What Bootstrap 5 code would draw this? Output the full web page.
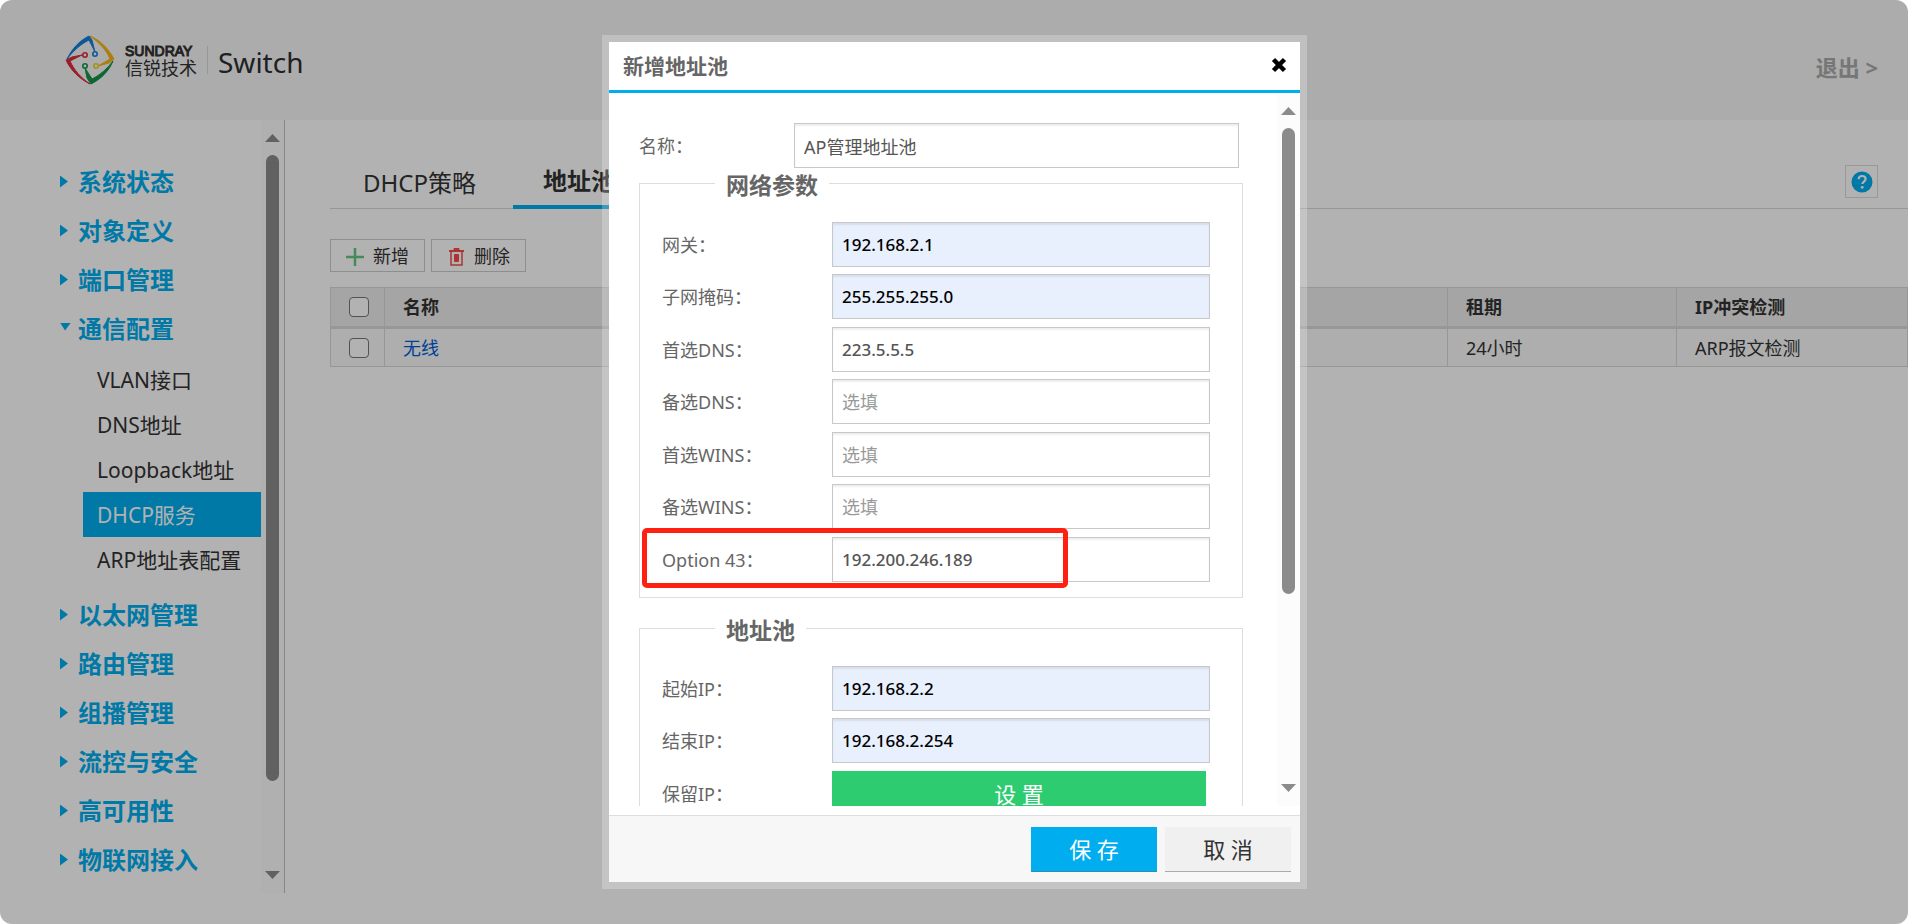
<!DOCTYPE html>
<html lang="zh-CN">
<head>
<meta charset="utf-8">
<meta name="viewport" content="width=device-width, initial-scale=1">
<title>SUNDRAY Switch</title>
<link href="https://cdn.jsdelivr.net/npm/bootstrap@5.3.0/dist/css/bootstrap.min.css" rel="stylesheet">
<style>
  body { font-family: "Noto Sans", "Noto Sans CJK SC", sans-serif; font-size: 18px; line-height: 24px; color: #333; background: #fff; }
  a { text-decoration: none; color: inherit; }
  .app { height: 100vh; border-radius: 12px; overflow: hidden; background: #fff; }
  .topbar { height: 120px; background: #f6f6f6; padding: 0 30px 0 65px; flex: none; }
  .brand-lockup { gap: 10px; }
  .brand-en { font: 14px/16px "Liberation Sans", sans-serif; -webkit-text-stroke: 1px #333; }
  .brand-zh { font-size: 18px; line-height: 18px; }
  .brand-rule { width: 1px; height: 28px; background: #d8d8d8; }
  .brand-product { font-size: 28px; line-height: 32px; color: #2c2f33; padding-top: 3px; }
  .logout { font-size: 22px; font-weight: 700; color: #a9a9a9; margin-top: 13px; }

  .workspace { min-height: 0; }
  .sidebar { width: 285px; flex: none; border-right: 1px solid #c0c0c0; margin-bottom: 31px; overflow: hidden; }
  .side-menu { padding: 37px 0 0 60px; }
  .side-menu .group { display: flex; align-items: center; height: 49px; font-size: 24px; font-weight: 700; color: #00aef0; }
  .side-menu .group::before { content: ""; flex: none; width: 18px; height: 12px; background: currentColor; clip-path: polygon(0 0, 8px 6px, 0 12px); }
  .side-menu .group.open::before { height: 8px; clip-path: polygon(0 0, 11px 0, 5px 8px); margin-bottom: 4px; }
  .side-sub { padding: 4px 0 8px 23px; }
  .side-sub a { display: flex; align-items: center; height: 45px; padding-left: 14px; font-size: 21px; white-space: nowrap; }
  .side-sub a.active { background: #00aef0; color: #fff; }

  .scroll-rail { width: 23px; flex: none; background: #fcfcfc; padding: 14px 0; }
  .scroll-rail::before, .scroll-rail::after { content: ""; width: 15px; height: 8px; background: #8b8b8b; clip-path: polygon(50% 0, 100% 100%, 0 100%); }
  .scroll-rail::after { clip-path: polygon(0 0, 100% 0, 50% 100%); margin-top: auto; }
  .scroll-rail i { width: 13px; margin-top: 13px; border-radius: 7px; background: #8b8b8b; }

  .content-pane { padding: 37px 0 0 45px; min-width: 0; }
  .page-tabs { border-bottom: 1px solid #d8d8d8; padding-right: 30px; height: 52px; }
  .page-tabs .tab { height: 52px; min-width: 183px; padding: 0 33px; font-size: 24px; line-height: 48px; border: 0; background: none; color: #333; text-align: left; }
  .page-tabs .tab.active { min-width: 0; padding: 0 30px; font-weight: 700; border-bottom: 4px solid #00aef0; }
  .help-btn { width: 33px; height: 33px; padding: 0; border: 1px solid #dcdcdc; background: #fff; margin-top: 8px; }
  .tool-row { padding-top: 30px; gap: 6px; }
  .tool-btn { height: 33px; width: 95px; border: 1px solid #ccc; background: #fff; color: #333; padding: 0 0 0 14px; gap: 8px; }
  .pool-table { margin-top: 15px; border: 1px solid #d8d8d8; table-layout: fixed; width: 100%; }
  .pool-table th, .pool-table td { border-right: 1px solid #d8d8d8; padding: 0 18px; height: 39px; vertical-align: middle; }
  .pool-table th { background: #ececec; border-bottom: 3px solid #d8d8d8; height: 40px; }
  .pool-table td { background: #f9f9f9; }
  .pool-table .pick { padding: 0 0 0 3px; }
  .pool-table .pick input { width: 20px; height: 20px; margin: 0 auto; border: 1px solid #767676; border-radius: 4px; display: block; background-color: #fff; float: none; }
  .pool-table a { color: #005cd8; }

  .veil { position: absolute; inset: 0; background: rgba(0,0,0,.3); }
  .pool-modal { padding-left: 1px !important; overflow: hidden; }
  .pool-modal .modal-dialog { max-width: 705px; margin: 35px auto; height: calc(100vh - 70px); }
  .pool-modal .modal-content { height: 100%; border: 7px solid rgba(255,255,255,.24); border-radius: 0; background-clip: padding-box; color: #666; }
  .pool-modal .modal-header { height: 51px; flex: none; border-bottom: 3px solid #00aef0; border-radius: 0; padding: 0 12px 0 14px; }
  .pool-modal .modal-title { font-size: 21px; font-weight: 700; line-height: 28px; }
  .x-btn { border: 0; background: none; padding: 0; line-height: 0; margin-bottom: 2px; }
  .form-area { overflow: hidden; padding: 30px 34px 0 30px; min-height: 0; }
  .line { display: flex; align-items: center; height: 45px; margin-bottom: 7px; position: relative; }
  .line:nth-of-type(even) { margin-bottom: 8px; }
  .line label { flex: none; width: 170px; }
  .line.first { margin-bottom: 15px; padding-right: 4px; }
  .line.first label { width: 155px; }
  .line .form-control { height: 45px; border: 1px solid #c8c8c8; border-radius: 0; font-size: 18px; color: #555; padding: 0 9px; background: #fff; box-shadow: inset 0 2px 2px rgba(0,0,0,.07); }
  .line .form-control.ip { font-size: 17px; font-weight: 500; }
  .line .form-control::placeholder { color: #999; }
  .line .form-control.filled { background: #e8effd; color: #000; }
  .group-box { border: 1px solid #ddd; padding: 37px 32px 8px 22px; margin-bottom: 30px; position: relative; }
  .group-box.net { padding-top: 38px; }
  .group-box legend { position: absolute; top: -14px; left: 75px; float: none; width: auto; margin: 0; padding: 0 11px; background: #fff; font-size: 23px; line-height: 30px; font-weight: 700; }
  .set-btn { flex: 1; height: 45px; margin-right: 4px; padding: 0; border: 0; background: #2ecc71; color: #fff; font-size: 22px; line-height: 22px; }
  .callout-frame { position: absolute; left: -20px; right: 142px; top: -9px; bottom: -6px; border: 5px solid #ff2012; border-radius: 5px; pointer-events: none; }
  .pool-modal .modal-footer { flex: none; height: 67px; margin-top: 9px; padding: 0 9px 0 0; gap: 8px; border-top: 1px solid #ddd; border-radius: 0; background: #f7f7f7; flex-wrap: nowrap; }
  .pool-modal .modal-footer button { width: 126px; height: 45px; margin: 0; border: 0; font-size: 22px; }
  .save-btn { background: #00aef0; color: #fff; border-bottom: 1px solid #2b8fb8 !important; }
  .cancel-btn { background: #f0f0f0; color: #333; border-bottom: 1px solid #aaa !important; }
</style>
</head>
<body>
<div class="app d-flex flex-column position-relative">
  <header class="topbar d-flex align-items-center justify-content-between">
    <div class="d-flex align-items-center brand-lockup">
      <svg width="50" height="50" viewBox="0 0 50 50" fill="none" stroke-width="1" aria-hidden="true">
        <path d="M2 24C7 14 14 6 24 1L27 5L30 17L24 5C16 9 9 15 2 24Z" fill="#1380d8" stroke="#1380d8"/>
        <path d="M25 1C35 5 43 13 49 24L44 28L33 31L45 24C42 16 35 8 25 1Z" fill="#f8b618" stroke="#f8b618"/>
        <path d="M48 26C44 36 36 44 26 49L22 43L20 33L27 44C35 40 42 34 48 26Z" fill="#159447" stroke="#159447"/>
        <path d="M25 49C15 44 6 36 1 25L7 22L17 20L5 26C9 35 16 43 25 49Z" fill="#dc2b3c" stroke="#dc2b3c"/>
        <g stroke-width="1.600"><circle cx="30" cy="19" r="2.200" stroke="#1380d8"/><circle cx="31" cy="31" r="2.200" stroke="#f0d020"/>
        <circle cx="20" cy="31" r="2.200" stroke="#159447"/><circle cx="20" cy="20" r="2.200" stroke="#dc2b3c"/></g>
      </svg>
      <div>
        <div class="brand-en">SUNDRAY</div>
        <div class="brand-zh">信锐技术</div>
      </div>
      <div class="brand-rule"></div>
      <div class="brand-product">Switch</div>
    </div>
    <a href="#" class="logout">退出 &gt;</a>
  </header>

  <div class="workspace d-flex flex-grow-1">
    <aside class="sidebar d-flex">
      <nav class="side-menu flex-grow-1">
        <a class="group" href="#">系统状态</a>
        <a class="group" href="#">对象定义</a>
        <a class="group" href="#">端口管理</a>
        <a class="group open" href="#">通信配置</a>
        <div class="side-sub">
          <a href="#">VLAN接口</a>
          <a href="#">DNS地址</a>
          <a href="#">Loopback地址</a>
          <a href="#" class="active">DHCP服务</a>
          <a href="#">ARP地址表配置</a>
        </div>
        <a class="group" href="#">以太网管理</a>
        <a class="group" href="#">路由管理</a>
        <a class="group" href="#">组播管理</a>
        <a class="group" href="#">流控与安全</a>
        <a class="group" href="#">高可用性</a>
        <a class="group" href="#">物联网接入</a>
      </nav>
      <div class="scroll-rail d-flex flex-column align-items-center"><i style="height:84%"></i></div>
    </aside>

    <main class="content-pane flex-grow-1">
      <div class="page-tabs d-flex">
        <button type="button" class="tab">DHCP策略</button>
        <button type="button" class="tab active">地址池</button>
        <button type="button" class="help-btn ms-auto d-flex align-items-center justify-content-center" aria-label="帮助">
          <svg width="22" height="22" viewBox="0 0 22 22"><circle cx="11" cy="11" r="10.5" fill="#00aef0"/><path d="M7.600 8.300C7.700 6 9.200 5 11 5s3.600 1.100 3.600 3.100c0 2.400-3.300 2.500-3.300 5" fill="none" stroke="#fff" stroke-width="2.200"/><circle cx="11.200" cy="16.300" r="1.400" fill="#fff"/></svg>
        </button>
      </div>
      <div class="tool-row d-flex">
        <button type="button" class="tool-btn d-flex align-items-center">
          <svg width="20" height="20" viewBox="0 0 20 20"><path d="M10 2v18M1 11h18" stroke="#66c680" stroke-width="2.500"/></svg>新增</button>
        <button type="button" class="tool-btn d-flex align-items-center">
          <svg width="20" height="20" viewBox="0 0 20 20" fill="none" stroke="#f54c4c"><path d="M3 5h15" stroke-width="2"/><path d="M8 2.500h5v2H8z" fill="#f54c4c"/><path d="M5 5v14h11V5" stroke-width="1.500"/><path d="M8.500 8.500h4v7h-4z" fill="#f54c4c"/></svg>删除</button>
      </div>
      <table class="pool-table">
        <colgroup><col style="width:54px"><col><col style="width:229px"><col style="width:231px"></colgroup>
        <thead><tr>
          <th class="pick"><input type="checkbox" class="form-check-input" aria-label="全选"></th>
          <th>名称</th><th>租期</th><th>IP冲突检测</th>
        </tr></thead>
        <tbody><tr>
          <td class="pick"><input type="checkbox" class="form-check-input" aria-label="选择无线"></td>
          <td><a href="#">无线</a></td><td>24小时</td><td>ARP报文检测</td>
        </tr></tbody>
      </table>
    </main>
  </div>
  <div class="veil"></div>
</div>

<div class="modal pool-modal d-block" role="dialog" aria-labelledby="poolTitle">
  <div class="modal-dialog">
    <form class="modal-content">
      <div class="modal-header d-flex justify-content-between align-items-center">
        <h1 class="modal-title" id="poolTitle">新增地址池</h1>
        <button type="button" class="x-btn" aria-label="关闭">
          <svg width="18" height="16" viewBox="0 0 18 16"><path d="M3.500 2.500l11 11M14.500 2.500l-11 11" stroke="#000" stroke-width="4.500"/></svg>
        </button>
      </div>
      <div class="d-flex flex-grow-1" style="min-height:0">
        <div class="form-area flex-grow-1">
          <div class="line first"><label for="nm">名称：</label><input id="nm" class="form-control" value="AP管理地址池"></div>
          <fieldset class="group-box net">
            <legend>网络参数</legend>
            <div class="line"><label for="gw">网关：</label><input id="gw" class="form-control ip filled" value="192.168.2.1"></div>
            <div class="line"><label for="mask">子网掩码：</label><input id="mask" class="form-control ip filled" value="255.255.255.0"></div>
            <div class="line"><label for="dns1">首选DNS：</label><input id="dns1" class="form-control ip" value="223.5.5.5"></div>
            <div class="line"><label for="dns2">备选DNS：</label><input id="dns2" class="form-control" placeholder="选填"></div>
            <div class="line"><label for="wins1">首选WINS：</label><input id="wins1" class="form-control" placeholder="选填"></div>
            <div class="line"><label for="wins2">备选WINS：</label><input id="wins2" class="form-control" placeholder="选填"></div>
            <div class="line"><label for="opt43">Option 43：</label><input id="opt43" class="form-control ip" value="192.200.246.189"><span class="callout-frame"></span></div>
          </fieldset>
          <fieldset class="group-box">
            <legend>地址池</legend>
            <div class="line"><label for="ip1">起始IP：</label><input id="ip1" class="form-control ip filled" value="192.168.2.2"></div>
            <div class="line"><label for="ip2">结束IP：</label><input id="ip2" class="form-control ip filled" value="192.168.2.254"></div>
            <div class="line"><label for="keep">保留IP：</label><button type="button" id="keep" class="set-btn">设 置</button></div>
          </fieldset>
        </div>
        <div class="scroll-rail d-flex flex-column align-items-center"><i style="height:68%"></i></div>
      </div>
      <div class="modal-footer">
        <button type="submit" class="save-btn">保 存</button>
        <button type="button" class="cancel-btn">取 消</button>
      </div>
    </form>
  </div>
</div>
<script src="https://cdn.jsdelivr.net/npm/bootstrap@5.3.0/dist/js/bootstrap.bundle.min.js"></script>
</body>
</html>
